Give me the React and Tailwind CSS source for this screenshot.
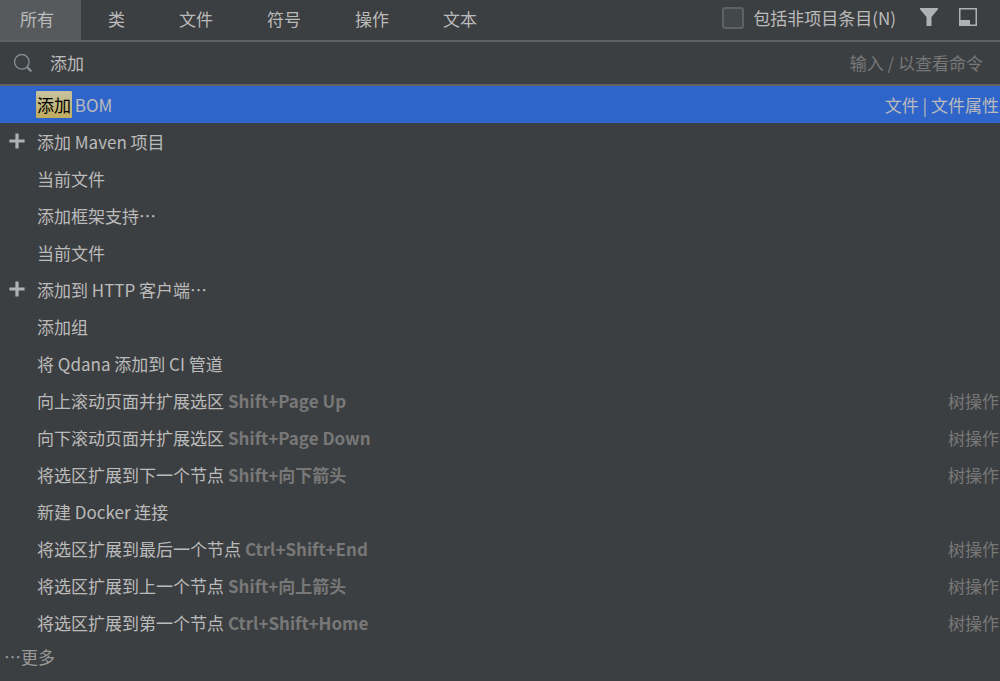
import React, { useState } from "react";
import clsx from "clsx";

const tabs = ["所有", "类", "文件", "符号", "操作", "文本"];

const results = [
	{ match: "添加", text: " BOM", location: "文件 | 文件属性" },
	{ text: "添加 Maven 项目", icon: true },
	{ text: "当前文件" },
	{ text: "添加框架支持…" },
	{ text: "当前文件" },
	{ text: "添加到 HTTP 客户端…", icon: true },
	{ text: "添加组" },
	{ text: "将 Qdana 添加到 CI 管道" },
	{ text: "向上滚动页面并扩展选区", shortcut: "Shift+Page Up", location: "树操作" },
	{ text: "向下滚动页面并扩展选区", shortcut: "Shift+Page Down", location: "树操作" },
	{ text: "将选区扩展到下一个节点", shortcut: "Shift+向下箭头", location: "树操作" },
	{ text: "新建 Docker 连接" },
	{ text: "将选区扩展到最后一个节点", shortcut: "Ctrl+Shift+End", location: "树操作" },
	{ text: "将选区扩展到上一个节点", shortcut: "Shift+向上箭头", location: "树操作" },
	{ text: "将选区扩展到第一个节点", shortcut: "Ctrl+Shift+Home", location: "树操作" },
];

const PlusIcon = () => (
	<svg width="16" height="16" viewBox="0 0 16 16" fill="#afb1b3">
		<path d="M6.4 0.4h3.2v6h6v3.2h-6v6h-3.2v-6h-6v-3.2h6z" />
	</svg>
);

const SearchIcon = () => (
	<svg width="20" height="20" viewBox="0 0 20 20" fill="none" stroke="#7f8b91">
		<circle cx="8.8" cy="8.8" r="7.3" strokeWidth="1.4" />
		<path d="M13.8 13.8L18.4 18.4" strokeWidth="2.4" />
	</svg>
);

const FilterIcon = () => (
	<svg width="18" height="18" viewBox="0 0 18 18" fill="#afb1b3">
		<path d="M0 0h18v1.2L11.5 9v9h-5V9L0 1.2z" />
	</svg>
);

const WindowIcon = () => (
	<svg width="18" height="18" viewBox="0 0 18 18">
		<path d="M0.75 0.75h16.5v16.5H0.75z" fill="none" stroke="#afb1b3" strokeWidth="1.5" />
		<path d="M1 12h10v5H1z" fill="#afb1b3" />
	</svg>
);

const ResultRow = ({ item, selected, onSelect }) => (
	<li>
		<button
			type="button"
			onClick={onSelect}
			className={clsx(
				"flex h-[37px] w-full items-center text-left",
				selected && "bg-[#2f65ca]"
			)}
		>
			<span className="flex w-9 shrink-0 pb-0.5 pl-[9px]">{item.icon && <PlusIcon />}</span>
			<span className="flex-1 whitespace-pre pl-px">
				{item.match && (
					<mark className="-mx-px rounded-xs bg-linear-to-b from-[#c6c3a2] to-[#c1ab5c] px-px py-px text-black">
						{item.match}
					</mark>
				)}
				{item.text}
				{item.shortcut && (
					<kbd className="ml-1 font-[inherit] text-[17px] font-bold text-[#787878]">
						{item.shortcut}
					</kbd>
				)}
			</span>
			<span className={clsx("pr-px", selected ? "text-[#bbbbbb]" : "text-[#787878]")}>
				{item.location}
			</span>
		</button>
	</li>
);

const App = () => {
	const [tab, setTab] = useState(0);
	const [selected, setSelected] = useState(0);
	const [query, setQuery] = useState("添加");

	return (
		<div
			lang="zh-CN"
			className="min-h-screen bg-[#3c3f41] font-['Noto_Sans_CJK_SC',sans-serif] text-[17px] leading-6 text-[#bbbbbb]"
		>
			<header className="flex h-[42px] items-stretch border-b-2 border-[#616161]">
				<nav className="flex">
					{tabs.map((name, i) => (
						<button
							key={name}
							type="button"
							onClick={() => setTab(i)}
							className={clsx(
								"pr-[27px] pb-0.5",
								i === 0 ? "pl-5" : "pl-[27px]",
								tab === i && "bg-[#565a5d]"
							)}
						>
							{name}
						</button>
					))}
				</nav>
				<div className="ml-auto flex items-center pr-[23px] pb-1">
					<label className="flex items-center gap-[9px]">
						<input
							type="checkbox"
							className="size-[22px] appearance-none rounded-[3px] border-2 border-[#5f6263] bg-[#43494a] checked:bg-[#afb1b3]"
						/>
						包括非项目条目(N)
					</label>
					<button type="button" aria-label="过滤" className="ml-6 pb-0.5">
						<FilterIcon />
					</button>
					<button type="button" aria-label="打开窗口" className="ml-[21px] pb-0.5">
						<WindowIcon />
					</button>
				</div>
			</header>
			<div className="flex h-11 items-center border-b-2 border-[#616161] pr-[17px] pl-[13px]">
				<SearchIcon />
				<input
					type="text"
					aria-label="搜索"
					value={query}
					onChange={(e) => setQuery(e.target.value)}
					className="ml-[17px] min-w-0 flex-1 bg-transparent outline-none"
				/>
				<span className="text-[#787878]">输入 / 以查看命令</span>
			</div>
			<ul>
				{results.map((item, i) => (
					<ResultRow
						key={i}
						item={item}
						selected={selected === i}
						onSelect={() => setSelected(i)}
					/>
				))}
			</ul>
			<button type="button" className="block h-8 w-full pl-1 text-left text-[#999999]">
				…更多
			</button>
		</div>
	);
};

export default App;
